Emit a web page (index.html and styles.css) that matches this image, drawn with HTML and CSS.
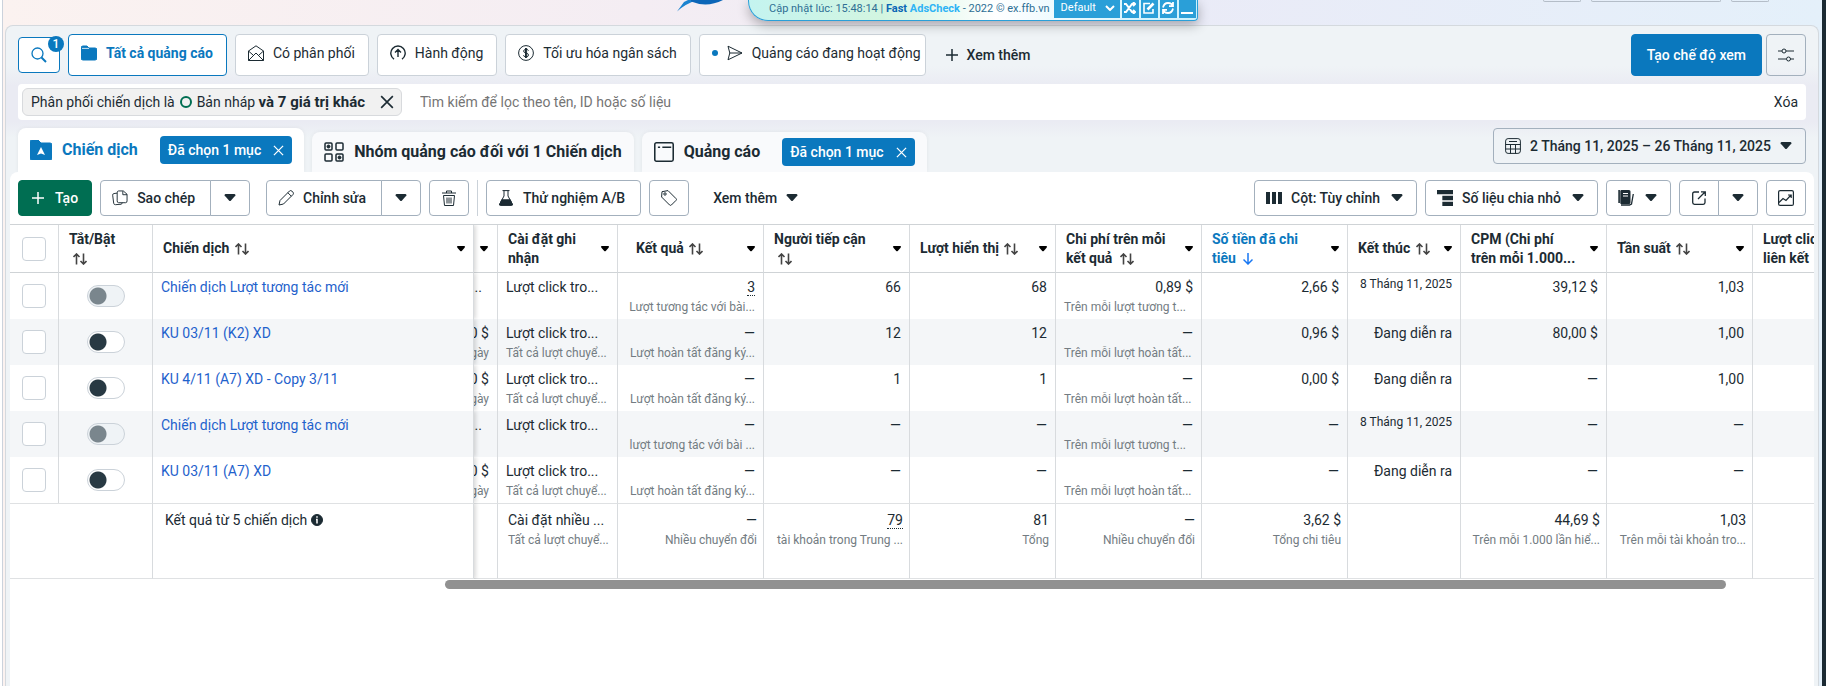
FILE: index.html
```html
<!DOCTYPE html>
<html lang="vi">

<head>
    <meta charset="UTF-8">
    <meta name="viewport" content="width=device-width, initial-scale=1.0">
    <title>Trình quản lý quảng cáo</title>
    <link rel="stylesheet" href="styles.css">
</head>

<body>
    <!-- Icons -->
    <svg class="sprite" aria-hidden="true">
        <symbol id="i-search" viewBox="0 0 16 16"><circle cx="6.5" cy="6.5" r="5.5" stroke-width="1.300"/><path d="M10.5 10.5 15 15" stroke-width="2"/></symbol>
        <symbol id="i-folder" viewBox="0 0 16 16"><path class="fill" d="M0 3q0-2 2-2h4l2 2h6q2 0 2 2v8q0 2-2 2H2q-2 0-2-2z"/><path stroke="#fff" stroke-width=".8" d="M1 3.4h7"/></symbol>
        <symbol id="i-mail" viewBox="0 0 16 16"><path d="M.5 6 8 .8 15.500 6v9.500H.5zM.5 6 5 10M15.500 6 11 10M.5 15.500 8 8l7.500 7.500"/></symbol>
        <symbol id="i-up" viewBox="0 0 16 16"><path stroke-width="1.400" d="M4 14.200a7.200 7.200 0 1 1 8 0M8 12V5M5 7.500l3-3 3 3"/></symbol>
        <symbol id="i-dollar" viewBox="0 0 16 16"><circle cx="8" cy="8" r="7.400"/><path d="M10.500 5.700Q10 4.300 8 4.300T5.600 6Q5.600 7.600 8 8t2.500 2Q10.500 11.800 8 11.800T5.500 10.200M7.500 3v10M8.600 3v10"/></symbol>
        <symbol id="i-send" viewBox="0 0 16 16"><path d="M1 1.200 15 8 1 14.800 2.800 8zM2.800 8H15"/></symbol>
        <symbol id="i-plus" viewBox="0 0 12 12"><path stroke-width="1.500" d="M6 0v12M0 6h12"/></symbol>
        <symbol id="i-sliders" viewBox="0 0 16 14"><path d="M0 3h4M8 3h8M0 11h8M12.500 11H16"/><circle cx="6" cy="3" r="2"/><circle cx="10.500" cy="11" r="2"/></symbol>
        <symbol id="i-close" viewBox="0 0 12 12"><path stroke-width="1.400" d="m1 1 10 10M11 1 1 11"/></symbol>
        <symbol id="i-campaign" viewBox="0 0 22 20"><path class="fill" d="M0 2q0-2 2-2h6l3 3h9q2 0 2 2v13q0 2-2 2H2q-2 0-2-2z"/><path fill="#fff" d="M11 7l4 8-4-1.500L7 15z" stroke="none"/></symbol>
        <symbol id="i-grid" viewBox="0 0 20 20"><g stroke-width="1.500"><rect x="1" y="1" width="7" height="7" rx="1"/><rect x="12" y="1" width="7" height="7" rx="1"/><rect x="1" y="12" width="7" height="7" rx="1"/><rect x="12" y="12" width="7" height="7" rx="1"/></g><circle class="fill" cx="4.500" cy="4.500" r="1.500"/><circle class="fill" cx="15.500" cy="15.500" r="1.500"/></symbol>
        <symbol id="i-window" viewBox="0 0 18 18"><rect x=".7" y=".7" width="16.600" height="16.600" rx="1.500" stroke-width="1.400"/><path stroke-width="1.400" d="M3.500 4.700h2M7.500 4.700h8"/></symbol>
        <symbol id="i-calendar" viewBox="0 0 16 16"><rect x=".6" y=".6" width="14.800" height="14.800" rx="2.500"/><path d="M.6 6.500h14.800M.6 11h14.800M5.500 6.500v9M10.500 6.500v9M4 3.500h8"/></symbol>
        <symbol id="i-caret" viewBox="0 0 12 8"><path class="fill" d="M1.500 0h9q2 1 0 2.500L7 6.500q-1 1-2 0L1.500 2.500q-2-1.500 0-2.500z" stroke="none"/></symbol>
        <symbol id="i-copy" viewBox="0 0 17 16"><path d="M5.500 2.500q0-2 1.500-2h5l4 3.500v7q0 2-1.500 2H7q-1.500 0-1.500-2zM11.500.8V4.500H16M5.500 2.800 2 3.300Q.5 3.600.7 5l1.100 8.600q.3 1.600 1.900 1.500l6.300-.5 1-1.600"/></symbol>
        <symbol id="i-pencil" viewBox="0 0 16 16"><path d="M1 15l1-4.500L11.500 1q1.200-1 2.400.1l1 1q1.100 1.200.1 2.400L5.500 14zM9.800 2.700l3.500 3.500"/></symbol>
        <symbol id="i-trash" viewBox="0 0 14 16"><path d="M0 3h14M4.500 3V1h5v2M1.500 5.500h11L11.500 15.500h-9zM5 7.500v6M7 7.500v6M9 7.500v6"/></symbol>
        <symbol id="i-flask" viewBox="0 0 14 16"><path d="M3.500.6h7M5 .6V6L.7 14q-.4 1.400 1 1.400h10.600q1.400 0 1-1.400L9 6V.6"/><path class="fill" d="M2.700 9.800h8.600L13.500 15H.5z"/></symbol>
        <symbol id="i-tag" viewBox="0 0 16 16"><path d="M1 1.700 7 .6l8 8q1 1 0 1.800L10.400 15q-1 .8-1.800 0l-8-8z"/><circle cx="4" cy="4" r="1.200"/></symbol>
        <symbol id="i-columns" viewBox="0 0 16 12"><path class="fill" d="M0 0h4v12H0zM6 0h4v12H6zM12 0h4v12h-4z" stroke="none"/></symbol>
        <symbol id="i-breakdown" viewBox="0 0 15 15"><path class="fill" d="M0 0h15v4H0zM5 5.500h10v4H5zM5 11h10v4H5z" stroke="none"/></symbol>
        <symbol id="i-report" viewBox="0 0 16 16"><path class="fill" d="M.3 0h1.600v13H.3zM3.500 0h7.500q1.500 0 1.500 1.500v11q0 1.500-1.500 1.500H3q-.7 0-.7-.8V1.200Q2.300 0 3.500 0z" stroke="none"/><path stroke="#fff" d="M5 3.500h5M5 6h5"/><path stroke-width="1.300" d="M3 15h8.500l2-1L15.300 4"/></symbol>
        <symbol id="i-export" viewBox="0 0 14 14"><path stroke-width="1.300" d="M7 1H2.500Q.7 1 .7 2.800v8.700q0 1.800 1.800 1.800h8.700q1.800 0 1.800-1.800V7.500M6 8l7-7M9 .8h4.300V5"/></symbol>
        <symbol id="i-chart" viewBox="0 0 16 16"><rect x=".6" y=".6" width="14.800" height="14.800" rx="1.500" stroke-width="1.200"/><path stroke-width="1.200" d="m1 12.500 4-4 3 2 5-5.500M10 5h3.200v3"/></symbol>
        <symbol id="i-sort" viewBox="0 0 14 12"><path stroke-width="1.600" d="M3.500 11.500V1M.5 4l3-3 3 3M10.500.5V11M7.500 8l3 3 3-3"/></symbol>
        <symbol id="i-down" viewBox="0 0 10 12"><path stroke-width="1.500" d="M5 0v11M.5 6.500 5 11l4.500-4.500"/></symbol>
        <symbol id="i-info" viewBox="0 0 12 12"><circle class="fill" cx="6" cy="6" r="5.500"/><path stroke="#fff" stroke-width="1.500" d="M6 2.300v1.500M5 5.500h1v4"/></symbol>
        <symbol id="i-shuffle" viewBox="0 0 12 12"><path stroke-width="2" d="M0 2h2l6 8h3M0 10h2l6-8h3M9 0l2 2-2 2M9 8l2 2-2 2"/></symbol>
        <symbol id="i-edit" viewBox="0 0 12 12"><path stroke-width="1.600" d="M7 1.500H1v9.500h9V7"/><path stroke-width="2.600" d="M4.500 7.500 10.500 1.500"/></symbol>
        <symbol id="i-refresh" viewBox="0 0 12 12"><path stroke-width="1.800" d="M1 5.500Q2 1 6 1t4.500 3M11 0v4.200H7M11 6.500Q10 11 6 11T1.500 8M1 12V7.800h4"/></symbol>
    </svg>

    <div class="app">
        <header class="topbar">
            <svg class="logo" viewBox="0 0 50 12"><path d="M2 11.500 9 2l4-2h9Q10 4 2 11.500z" fill="#1b83d0"/><path d="M16 1.500Q32 8 48 0H16z" fill="#0b66b8"/></svg>
            <div class="topbar-right">
                <span class="stub"></span>
                <span class="stub stub-wide"></span>
                <span class="stub"></span>
            </div>
        </header>

        <div class="adscheck">
            <span class="adscheck-text">Cập nhật lúc: 15:48:14 | <b>Fast <i>AdsCheck</i></b> - 2022 © ex.ffb.vn</span>
            <span class="adscheck-select">
                <select aria-label="Chế độ"><option>Default</option></select>
                <svg viewBox="0 0 10 6"><path stroke-width="2" d="m1 1 4 4 4-4"/></svg>
            </span>
            <button aria-label="Trộn"><svg><use href="#i-shuffle"/></svg></button>
            <button aria-label="Sửa"><svg><use href="#i-edit"/></svg></button>
            <button aria-label="Tải lại"><svg><use href="#i-refresh"/></svg></button>
            <button aria-label="Thu nhỏ"><svg viewBox="0 0 12 12"><path stroke-width="2" d="M0 11h12"/></svg></button>
        </div>

        <main class="card">
            <div class="views">
                <button class="btn view-search" aria-label="Tìm kiếm"><svg class="ic16"><use href="#i-search"/></svg><span class="badge">1</span></button>
                <button class="btn view active"><svg class="ic16"><use href="#i-folder"/></svg>Tất cả quảng cáo</button>
                <button class="btn view"><svg class="ic16"><use href="#i-mail"/></svg>Có phân phối</button>
                <button class="btn view"><svg class="ic16"><use href="#i-up"/></svg>Hành động</button>
                <button class="btn view"><svg class="ic16"><use href="#i-dollar"/></svg>Tối ưu hóa ngân sách</button>
                <button class="btn view view-last"><span class="dot"></span><svg class="ic16"><use href="#i-send"/></svg>Quảng cáo đang hoạt động</button>
                <button class="btn view-more"><svg class="ic12"><use href="#i-plus"/></svg>Xem thêm</button>
                <button class="btn create-view">Tạo chế độ xem</button>
                <button class="btn view-settings" aria-label="Tùy chỉnh chế độ xem"><svg class="ic16"><use href="#i-sliders"/></svg></button>
            </div>

            <div class="filter">
                <div class="token">
                    <span>Phân phối chiến dịch là <span class="ring"></span> Bản nháp <b>và 7 giá trị khác</b></span>
                    <button aria-label="Xóa bộ lọc"><svg class="ic14"><use href="#i-close"/></svg></button>
                </div>
                <input type="text" placeholder="Tìm kiếm để lọc theo tên, ID hoặc số liệu" aria-label="Tìm kiếm để lọc">
                <button class="clear">Xóa</button>
            </div>

            <div class="tabs">
                <div class="tab active"><svg class="ic22"><use href="#i-campaign"/></svg><a href="#">Chiến dịch</a>
                    <button class="chip">Đã chọn 1 mục <svg><use href="#i-close"/></svg></button></div>
                <div class="tab"><svg class="ic20"><use href="#i-grid"/></svg><a href="#">Nhóm quảng cáo đối với 1 Chiến dịch</a></div>
                <div class="tab"><svg class="ic20"><use href="#i-window"/></svg><a href="#">Quảng cáo</a>
                    <button class="chip">Đã chọn 1 mục <svg><use href="#i-close"/></svg></button></div>
                <button class="btn date"><svg class="ic16"><use href="#i-calendar"/></svg>2 Tháng 11, 2025 – 26 Tháng 11, 2025<svg class="caret"><use href="#i-caret"/></svg></button>
            </div>

            <section class="panel">
                <div class="toolbar">
                    <button class="btn create"><svg class="ic12"><use href="#i-plus"/></svg>Tạo</button>
                    <div class="split split-copy">
                        <button class="btn"><svg class="ic16"><use href="#i-copy"/></svg>Sao chép</button>
                        <button class="btn more" aria-label="Thêm tùy chọn sao chép"><svg class="caret"><use href="#i-caret"/></svg></button>
                    </div>
                    <div class="split">
                        <button class="btn"><svg class="ic16"><use href="#i-pencil"/></svg>Chỉnh sửa</button>
                        <button class="btn more" aria-label="Thêm tùy chọn chỉnh sửa"><svg class="caret"><use href="#i-caret"/></svg></button>
                    </div>
                    <button class="btn square" aria-label="Xóa"><svg class="ic16"><use href="#i-trash"/></svg></button>
                    <span class="sep"></span>
                    <button class="btn test"><svg class="ic16"><use href="#i-flask"/></svg>Thử nghiệm A/B</button>
                    <button class="btn square" aria-label="Gắn thẻ"><svg class="ic16"><use href="#i-tag"/></svg></button>
                    <button class="btn plain">Xem thêm<svg class="caret"><use href="#i-caret"/></svg></button>

                    <button class="btn drop push"><svg class="ic16"><use href="#i-columns"/></svg>Cột: Tùy chỉnh<svg class="caret"><use href="#i-caret"/></svg></button>
                    <button class="btn drop"><svg class="ic16"><use href="#i-breakdown"/></svg>Số liệu chia nhỏ<svg class="caret"><use href="#i-caret"/></svg></button>
                    <button class="btn drop" aria-label="Báo cáo"><svg class="ic16"><use href="#i-report"/></svg><svg class="caret"><use href="#i-caret"/></svg></button>
                    <div class="split">
                        <button class="btn square" aria-label="Xuất"><svg class="ic14"><use href="#i-export"/></svg></button>
                        <button class="btn more" aria-label="Thêm tùy chọn xuất"><svg class="caret"><use href="#i-caret"/></svg></button>
                    </div>
                    <button class="btn square" aria-label="Biểu đồ"><svg class="ic16"><use href="#i-chart"/></svg></button>
                </div>

                <div class="table-wrap">
                    <table>
                        <colgroup>
                            <col class="c-check"><col class="c-toggle"><col class="c-name"><col class="c-budget"><col class="c-attr">
                            <col class="c-num"><col class="c-num"><col class="c-num"><col class="c-num"><col class="c-num">
                            <col class="c-end"><col class="c-num"><col class="c-num"><col>
                        </colgroup>
                        <thead>
                            <tr>
                                <th class="center"><input type="checkbox" aria-label="Chọn tất cả"></th>
                                <th><div class="th"><span>Tắt/Bật<br><svg class="sort"><use href="#i-sort"/></svg></span></div></th>
                                <th class="name"><div class="th"><span>Chiến dịch <svg class="sort"><use href="#i-sort"/></svg></span><svg class="arrow"><use href="#i-caret"/></svg></div></th>
                                <th class="budget"><div class="th"><svg class="arrow"><use href="#i-caret"/></svg></div></th>
                                <th><div class="th"><span>Cài đặt ghi<br>nhận</span><svg class="arrow"><use href="#i-caret"/></svg></div></th>
                                <th class="result"><div class="th"><span>Kết quả <svg class="sort"><use href="#i-sort"/></svg></span><svg class="arrow"><use href="#i-caret"/></svg></div></th>
                                <th><div class="th"><span>Người tiếp cận<br><svg class="sort"><use href="#i-sort"/></svg></span><svg class="arrow"><use href="#i-caret"/></svg></div></th>
                                <th><div class="th"><span>Lượt hiển thị <svg class="sort"><use href="#i-sort"/></svg></span><svg class="arrow"><use href="#i-caret"/></svg></div></th>
                                <th><div class="th"><span>Chi phí trên mỗi<br>kết quả <svg class="sort"><use href="#i-sort"/></svg></span><svg class="arrow"><use href="#i-caret"/></svg></div></th>
                                <th class="sorted"><div class="th"><span>Số tiền đã chi<br>tiêu <svg class="sort-down"><use href="#i-down"/></svg></span><svg class="arrow"><use href="#i-caret"/></svg></div></th>
                                <th><div class="th"><span>Kết thúc <svg class="sort"><use href="#i-sort"/></svg></span><svg class="arrow"><use href="#i-caret"/></svg></div></th>
                                <th><div class="th"><span>CPM (Chi phí<br>trên mỗi 1.000...</span><svg class="arrow"><use href="#i-caret"/></svg></div></th>
                                <th><div class="th"><span>Tần suất <svg class="sort"><use href="#i-sort"/></svg></span><svg class="arrow"><use href="#i-caret"/></svg></div></th>
                                <th><div class="th"><span>Lượt click<br>liên kết</span></div></th>
                            </tr>
                        </thead>
                        <tbody>
                            <tr>
                                <td class="center"><input type="checkbox" aria-label="Chọn chiến dịch 1"></td>
                                <td class="center"><input type="checkbox" class="toggle" disabled aria-label="Bật chiến dịch 1"></td>
                                <td class="name"><a href="#">Chiến dịch Lượt tương tác mới</a></td>
                                <td class="budget dots"><p>...</p></td>
                                <td class="text"><p>Lượt click tro...</p></td>
                                <td><p><u>3</u></p><small>Lượt tương tác với bài...</small></td>
                                <td><p>66</p></td>
                                <td><p>68</p></td>
                                <td class="cost"><p>0,89 $</p><small>Trên mỗi lượt tương t...</small></td>
                                <td><p>2,66 $</p></td>
                                <td><time>8 Tháng 11, 2025</time></td>
                                <td><p>39,12 $</p></td>
                                <td><p>1,03</p></td>
                                <td></td>
                            </tr>
                            <tr>
                                <td class="center"><input type="checkbox" aria-label="Chọn chiến dịch 2"></td>
                                <td class="center"><input type="checkbox" class="toggle" aria-label="Bật chiến dịch 2"></td>
                                <td class="name"><a href="#">KU 03/11 (K2) XD</a></td>
                                <td class="budget"><p>0 $</p><small>ngày</small></td>
                                <td class="text"><p>Lượt click tro...</p><small>Tất cả lượt chuyể...</small></td>
                                <td><p>—</p><small>Lượt hoàn tất đăng ký...</small></td>
                                <td><p>12</p></td>
                                <td><p>12</p></td>
                                <td class="cost"><p>—</p><small>Trên mỗi lượt hoàn tất...</small></td>
                                <td><p>0,96 $</p></td>
                                <td><p>Đang diễn ra</p></td>
                                <td><p>80,00 $</p></td>
                                <td><p>1,00</p></td>
                                <td></td>
                            </tr>
                            <tr>
                                <td class="center"><input type="checkbox" aria-label="Chọn chiến dịch 3"></td>
                                <td class="center"><input type="checkbox" class="toggle" aria-label="Bật chiến dịch 3"></td>
                                <td class="name"><a href="#">KU 4/11 (A7) XD - Copy 3/11</a></td>
                                <td class="budget"><p>0 $</p><small>ngày</small></td>
                                <td class="text"><p>Lượt click tro...</p><small>Tất cả lượt chuyể...</small></td>
                                <td><p>—</p><small>Lượt hoàn tất đăng ký...</small></td>
                                <td><p>1</p></td>
                                <td><p>1</p></td>
                                <td class="cost"><p>—</p><small>Trên mỗi lượt hoàn tất...</small></td>
                                <td><p>0,00 $</p></td>
                                <td><p>Đang diễn ra</p></td>
                                <td><p>—</p></td>
                                <td><p>1,00</p></td>
                                <td></td>
                            </tr>
                            <tr>
                                <td class="center"><input type="checkbox" aria-label="Chọn chiến dịch 4"></td>
                                <td class="center"><input type="checkbox" class="toggle" disabled aria-label="Bật chiến dịch 4"></td>
                                <td class="name"><a href="#">Chiến dịch Lượt tương tác mới</a></td>
                                <td class="budget dots"><p>...</p></td>
                                <td class="text"><p>Lượt click tro...</p></td>
                                <td><p>—</p><small>lượt tương tác với bài ...</small></td>
                                <td><p>—</p></td>
                                <td><p>—</p></td>
                                <td class="cost"><p>—</p><small>Trên mỗi lượt tương t...</small></td>
                                <td><p>—</p></td>
                                <td><time>8 Tháng 11, 2025</time></td>
                                <td><p>—</p></td>
                                <td><p>—</p></td>
                                <td></td>
                            </tr>
                            <tr>
                                <td class="center"><input type="checkbox" aria-label="Chọn chiến dịch 5"></td>
                                <td class="center"><input type="checkbox" class="toggle" aria-label="Bật chiến dịch 5"></td>
                                <td class="name"><a href="#">KU 03/11 (A7) XD</a></td>
                                <td class="budget"><p>0 $</p><small>ngày</small></td>
                                <td class="text"><p>Lượt click tro...</p><small>Tất cả lượt chuyể...</small></td>
                                <td><p>—</p><small>Lượt hoàn tất đăng ký...</small></td>
                                <td><p>—</p></td>
                                <td><p>—</p></td>
                                <td class="cost"><p>—</p><small>Trên mỗi lượt hoàn tất...</small></td>
                                <td><p>—</p></td>
                                <td><p>Đang diễn ra</p></td>
                                <td><p>—</p></td>
                                <td><p>—</p></td>
                                <td></td>
                            </tr>
                        </tbody>
                        <tfoot>
                            <tr>
                                <td colspan="2"></td>
                                <td class="name"><p>Kết quả từ 5 chiến dịch <svg class="info"><use href="#i-info"/></svg></p></td>
                                <td class="budget"></td>
                                <td class="text"><p>Cài đặt nhiều ...</p><small>Tất cả lượt chuyể...</small></td>
                                <td><p>—</p><small>Nhiều chuyển đổi</small></td>
                                <td><p><u>79</u></p><small>tài khoản trong Trung ...</small></td>
                                <td><p>81</p><small>Tổng</small></td>
                                <td><p>—</p><small>Nhiều chuyển đổi</small></td>
                                <td><p>3,62 $</p><small>Tổng chi tiêu</small></td>
                                <td></td>
                                <td><p>44,69 $</p><small>Trên mỗi 1.000 lần hiể...</small></td>
                                <td><p>1,03</p><small>Trên mỗi tài khoản tro...</small></td>
                                <td></td>
                            </tr>
                        </tfoot>
                    </table>
                </div>
                <div class="scrollbar"><div class="thumb"></div></div>
            </section>
        </main>
    </div>
</body>

</html>
```
FILE: styles.css
```css
* {
    box-sizing: border-box;
}

body {
    margin: 0;
    font-family: Roboto, "Noto Sans", sans-serif;
    font-size: 14px;
    line-height: 20px;
    color: #1c2b33;
    background: #fff;
}

button, input, select {
    font: inherit;
    color: inherit;
}

button {
    cursor: pointer;
    white-space: nowrap;
}

a {
    text-decoration: none;
    color: inherit;
}

p {
    margin: 0;
}

svg {
    fill: none;
    stroke: currentColor;
    flex-shrink: 0;
}

.fill {
    fill: currentColor;
}

.sprite {
    display: none;
}

.ic12 { width: 12px; height: 12px; }
.ic14 { width: 14px; height: 14px; }
.ic16 { width: 16px; height: 16px; }
.ic20 { width: 20px; height: 20px; }
.ic22 { width: 22px; height: 20px; }

.caret {
    width: 12px;
    height: 8px;
}

.app {
    display: flex;
    flex-direction: column;
    min-height: 100vh;
    margin-left: 2px;
    border-left: 1px solid #cbd2dc;
    border-right: 4px solid #1c2b33;
    background: linear-gradient(90deg, #fbf2f0 0%, #f4edf3 35%, #eaebf7 65%, #e4f0fa 100%);
}

/* Top strip */
.topbar {
    display: flex;
    align-items: flex-start;
    height: 25px;
    padding: 0 53px 0 672px;
}

.logo {
    width: 50px;
    height: 12px;
    stroke: none;
}

.topbar-right {
    display: flex;
    gap: 10px;
    margin-left: auto;
}

.stub {
    width: 38px;
    height: 2px;
    border: 1px solid #b4bdc8;
    border-top: 0;
    border-radius: 0 0 4px 4px;
}

.stub-wide {
    width: 130px;
}

.adscheck {
    position: absolute;
    top: 0;
    left: 748px;
    display: flex;
    gap: 2px;
    height: 21px;
    padding: 0 1px 2px 20px;
    border: 1px solid #2a9fd8;
    border-top: 0;
    border-radius: 0 0 4px 20px;
    background: linear-gradient(90deg, #c4f4f0, #d3f5e0 30%, #fff 55%, #c9f1fd);
    box-shadow: 0 4px 12px rgba(0, 0, 0, 0.3);
    font-size: 11px;
    line-height: 18px;
    color: #2f6f94;
}

.adscheck-text {
    margin-right: 2px;
    white-space: nowrap;
}

.adscheck b {
    color: #0b67b5;
}

.adscheck i {
    font-style: normal;
    color: #2fb4f5;
}

.adscheck-select {
    display: flex;
    align-items: center;
    gap: 8px;
    width: 66px;
    padding: 0 5px 2px 7px;
    background: #2a9fd8;
    color: #fff;
}

.adscheck-select select {
    appearance: none;
    width: 36px;
    padding: 0;
    border: 0;
    background: none;
    line-height: 16px;
}

.adscheck-select svg {
    width: 10px;
    height: 6px;
}

.adscheck button {
    width: 17px;
    padding: 0 0 3px;
    border: 0;
    background: #2a9fd8;
    color: #fff;
    line-height: 0;
}

.adscheck button svg {
    width: 12px;
    height: 12px;
}

/* Card */
.card {
    display: flex;
    flex-direction: column;
    flex: 1;
    margin: 0 3px 0 2px;
    border: 1px solid #d4d9de;
    border-bottom: 0;
    border-radius: 8px 8px 0 0;
    background: linear-gradient(#eff3f6 0, #eff3f6 40px, #eaebf3 60px, #eaebf3 96px, #eff3f6 112px);
}

.btn {
    display: inline-flex;
    align-items: center;
    justify-content: center;
    gap: 9px;
    height: 36px;
    padding: 0 11px;
    border: 1px solid #a3b0bd;
    border-radius: 4px;
    background: #fff;
    font-weight: 500;
}

.views {
    display: flex;
    align-items: center;
    gap: 8px;
    padding: 8px 12px;
}

.views .view {
    height: 42px;
    padding: 0 13px 4px 12px;
    border-color: #cbd2d9;
    font-weight: 400;
}

.views .view.active {
    border-color: #0a78be;
    color: #0a78be;
    font-weight: 700;
}

.views .view-last {
    padding: 0 4px 4px 12px;
}

.dot {
    width: 6px;
    height: 6px;
    border-radius: 50%;
    background: #0a78be;
}

.view-search {
    position: relative;
    width: 42px;
    padding: 0;
    border-color: #0a78be;
    color: #0a78be;
}

.badge {
    position: absolute;
    top: -2px;
    right: -5px;
    width: 16px;
    border-radius: 8px;
    background: #0a78be;
    color: #fff;
    font-size: 12px;
    line-height: 16px;
}

.view-more {
    padding: 0 12px;
    border: 0;
    background: none;
}

.create-view {
    height: 42px;
    margin: 0 -4px 0 auto;
    padding: 0 15px;
    border-color: #0a78be;
    background: #0a78be;
    color: #fff;
}

.view-settings {
    height: 42px;
    background: none;
}

/* Filter bar */
.filter {
    display: flex;
    align-items: center;
    gap: 18px;
    height: 36px;
    margin: 0 12px;
    padding: 0 8px 0 4px;
    border-radius: 4px;
    background: #fff;
}

.token {
    display: flex;
    align-items: center;
    gap: 15px;
    height: 28px;
    padding: 0 7px 0 8px;
    border: 1px solid #d8dadd;
    border-radius: 6px;
    background: #f1f1f1;
    white-space: nowrap;
}

.token b {
    font-size: 15px;
}

.token button, .clear {
    padding: 0;
    border: 0;
    background: none;
    line-height: 0;
}

.ring {
    display: inline-block;
    width: 12px;
    height: 12px;
    margin: 0 1px 0 2px;
    border: 2px solid #006e52;
    border-radius: 50%;
    vertical-align: -1px;
}

.filter input {
    flex: 1;
    min-width: 0;
    padding: 0;
    border: 0;
    outline: 0;
}

.filter input::placeholder {
    color: #757575;
}

/* Tabs */
.tabs {
    display: flex;
    align-items: flex-end;
    gap: 8px;
    padding: 8px 12px 0;
}

.tab {
    display: flex;
    align-items: center;
    gap: 10px;
    height: 40px;
    padding: 0 12px;
    border-radius: 8px 8px 0 0;
    background: #f9fafc;
    box-shadow: 0 0 4px rgba(0, 0, 0, 0.06);
    font-size: 16px;
    font-weight: 700;
    white-space: nowrap;
}

.tab.active {
    height: 44px;
    background: #fff;
    color: #0a78be;
}

.chip {
    display: flex;
    align-items: center;
    gap: 12px;
    height: 28px;
    margin-left: 12px;
    padding: 0 8px;
    border: 0;
    border-radius: 4px;
    background: #0a78be;
    color: #fff;
    font-size: 14px;
    font-weight: 500;
}

.chip svg {
    width: 11px;
    height: 11px;
}

.date {
    align-self: flex-start;
    margin-left: auto;
    padding: 0 13px 0 11px;
    background: none;
}

/* Main panel */
.panel {
    flex: 1;
    margin: 0 4px;
    border-radius: 8px 8px 0 0;
    background: #fff;
}

.toolbar {
    display: flex;
    align-items: center;
    gap: 8px;
    height: 52px;
    padding: 0 8px;
}

.create {
    gap: 11px;
    padding: 0 13px;
    border-color: #006e52;
    background: #006e52;
    color: #fff;
}

.split {
    display: flex;
}

.split-copy {
    margin-right: 8px;
}

.split .btn {
    padding-right: 15px;
    border-radius: 4px 0 0 4px;
}

.split .more {
    width: 40px;
    margin-left: -1px;
    padding: 0;
    border-radius: 0 4px 4px 0;
}

.toolbar .square {
    width: 40px;
    padding: 0;
}

.test {
    padding-right: 15px;
}

.sep {
    height: 36px;
    border-left: 1px solid #cbd2d9;
}

.toolbar .plain {
    border: 0;
    padding: 0 16px;
}

.drop {
    padding-right: 13px;
}

.drop .caret {
    margin-left: 2px;
}

.push {
    margin-left: auto;
}

/* Table */
.table-wrap {
    overflow: hidden;
}

table {
    width: 100%;
    min-width: 1780px;
    border-collapse: separate;
    border-spacing: 0;
    table-layout: fixed;
    border-top: 1px solid #cfd3d6;
}

.c-check { width: 49px; }
.c-toggle { width: 94px; }
.c-name { width: 321px; }
.c-budget { width: 24px; }
.c-attr { width: 120px; }
.c-num { width: 146px; }
.c-end { width: 113px; }

th, td {
    padding: 0 8px;
    border-right: 1px solid #d8dbde;
    overflow: hidden;
    white-space: nowrap;
}

th:last-child, td:last-child {
    border-right: 0;
}

th {
    height: 48px;
    padding: 0 7px 0 10px;
    border-bottom: 1px solid #cfd3d6;
    text-align: left;
    font-weight: 700;
    line-height: 19px;
}

.th {
    display: flex;
    align-items: center;
    justify-content: space-between;
}

th.result {
    padding-left: 18px;
}

th.sorted span {
    color: #0a78be;
}

.sort {
    width: 14px;
    height: 12px;
    margin-left: 2px;
    vertical-align: -2px;
    color: #444;
}

br + .sort {
    margin-left: 4px;
}

.sort-down {
    width: 10px;
    height: 12px;
    margin-left: 4px;
    vertical-align: -2px;
    color: #1877f2;
}

.arrow {
    width: 10px;
    height: 6px;
    color: #000;
}

td {
    height: 46px;
    padding-top: 4px;
    vertical-align: top;
    text-align: right;
}

tbody tr:nth-child(even) td {
    background: #f4f6f8;
}

th.center, td.center {
    padding: 0;
    text-align: center;
    vertical-align: middle;
    line-height: 0;
}

td.name, td.text {
    text-align: left;
}

td.cost small {
    text-align: left;
}

/* Frozen column, the shadow falls on its right side only */
.name {
    position: relative;
    box-shadow: 2px 0 4px rgba(0, 0, 0, 0.15);
    clip-path: inset(0 -6px 0 0);
}

td a {
    color: #1f62cc;
}

th.budget {
    padding: 0 8px 0 5px;
}

/* Content is pinned to the right edge, the rest stays under the name column */
td.budget p, td.budget small {
    display: flex;
    justify-content: flex-end;
}

td.budget.dots {
    padding-right: 15px;
}

small {
    display: block;
    padding-top: 1px;
    font-size: 12px;
    line-height: 18px;
    color: #737c82;
}

time {
    display: block;
    font-size: 12px;
    line-height: 14px;
}

u {
    text-decoration: none;
    border-bottom: 1px dotted #1c2b33;
}

tfoot td {
    height: 76px;
    padding: 6px 6px 0;
    border-top: 1px solid #dfe1e3;
    border-bottom: 1px solid #dfe1e3;
}

tfoot td.name {
    padding-left: 12px;
}

tfoot td.text {
    padding-left: 10px;
}

.info {
    width: 12px;
    height: 12px;
    vertical-align: -1px;
}

input[type="checkbox"] {
    appearance: none;
    width: 24px;
    height: 24px;
    margin: 0;
    border: 1px solid #cbd2d9;
    border-radius: 4px;
    background: #fff;
}

input.toggle {
    width: 38px;
    height: 22px;
    border-radius: 11px;
    background: radial-gradient(circle at 10px 10px, #283943 8px, transparent 9px) #fff;
}

input.toggle:disabled {
    background: radial-gradient(circle at 10px 10px, #7a868d 8px, transparent 9px) #eff3f6;
}

.scrollbar {
    padding-top: 1px;
}

.thumb {
    width: 71%;
    height: 9px;
    margin-left: 24.1%;
    border-radius: 5px;
    background: #919191;
}
```
